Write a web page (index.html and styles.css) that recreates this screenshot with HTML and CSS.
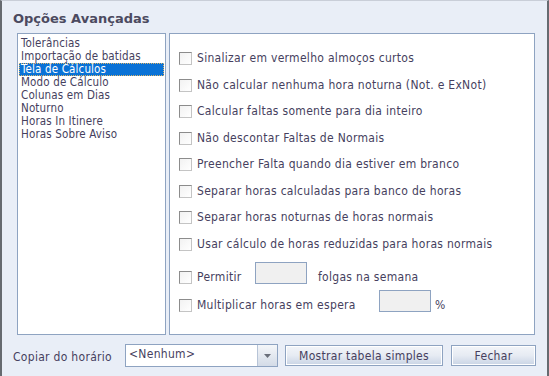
FILE: index.html
```html
<!DOCTYPE html>
<html lang="pt">
<head>
<meta charset="utf-8">
<link rel="stylesheet" href="styles.css">
</head>
<body>
<div class="window">
  <h1 class="title">Opções Avançadas</h1>
  <div class="main">
    <ul class="list">
      <li>Tolerâncias</li>
      <li>Importação de batidas</li>
      <li class="selected">Tela de Cálculos</li>
      <li>Modo de Cálculo</li>
      <li>Colunas em Dias</li>
      <li>Noturno</li>
      <li>Horas In Itinere</li>
      <li>Horas Sobre Aviso</li>
    </ul>
    <div class="panel">
      <div class="row"><span class="cb"></span><span class="lbl">Sinalizar em vermelho almoços curtos</span></div>
      <div class="row"><span class="cb"></span><span class="lbl">Não calcular nenhuma hora noturna (Not. e ExNot)</span></div>
      <div class="row"><span class="cb"></span><span class="lbl">Calcular faltas somente para dia inteiro</span></div>
      <div class="row"><span class="cb"></span><span class="lbl">Não descontar Faltas de Normais</span></div>
      <div class="row"><span class="cb"></span><span class="lbl">Preencher Falta quando dia estiver em branco</span></div>
      <div class="row"><span class="cb"></span><span class="lbl">Separar horas calculadas para banco de horas</span></div>
      <div class="row"><span class="cb"></span><span class="lbl">Separar horas noturnas de horas normais</span></div>
      <div class="row"><span class="cb"></span><span class="lbl">Usar cálculo de horas reduzidas para horas normais</span></div>
      <div class="row row-input row-permitir"><span class="cb"></span><span class="lbl lbl-permitir">Permitir</span><span class="field"></span><span class="lbl lbl-after">folgas na semana</span></div>
      <div class="row row-input row-mult"><span class="cb"></span><span class="lbl lbl-mult">Multiplicar horas em espera</span><span class="field"></span><span class="lbl lbl-pct">%</span></div>
    </div>
  </div>
  <div class="footer">
    <span class="footer-label">Copiar do horário</span>
    <div class="combo"><span class="combo-text">&lt;Nenhum&gt;</span><span class="combo-btn"><svg width="7" height="4" viewBox="0 0 7 4"><path d="M0 0H7L3.5 4Z" fill="#6a6f7a"/></svg></span></div>
    <button class="btn btn-wide">Mostrar tabela simples</button>
    <button class="btn btn-close">Fechar</button>
  </div>
</div>
</body>
</html>
```
FILE: styles.css
```css
html, body {
  margin: 0;
  padding: 0;
}
body {
  width: 549px;
  height: 376px;
  overflow: hidden;
  font-family: "DejaVu Sans Condensed", "DejaVu Sans", sans-serif;
  font-size: 12px;
  letter-spacing: 0.3px;
  color: #463f5e;
}
.window {
  box-sizing: border-box;
  width: 549px;
  height: 376px;
  background: #e9eef7;
  border-left: 2px solid #666a70;
  border-right: 2px solid #666a70;
  border-top: 1px solid #c9ced8;
}
.title {
  margin: 0;
  padding: 10px 0 0 11px;
  font-family: "DejaVu Sans", sans-serif;
  font-size: 13px;
  letter-spacing: 0;
  line-height: 16px;
  font-weight: bold;
  color: #4c4a60;
}
.main {
  display: flex;
  gap: 3px;
  margin-top: 6px;
  padding-left: 15px;
}
.list {
  box-sizing: border-box;
  width: 149px;
  height: 302px;
  margin: 0;
  padding: 3px 1px 0 1px;
  list-style: none;
  background: #fff;
  border: 1px solid #8ea3c1;
  font-size: 11.5px;
  letter-spacing: 0.15px;
}
.list li {
  height: 13px;
  line-height: 13px;
  padding-left: 2px;
  white-space: nowrap;
  box-sizing: border-box;
}
.list li.selected {
  background: #0a72d6;
  color: #fff;
  outline: 1px dotted #d9b36b;
  outline-offset: -1px;
}
.panel {
  box-sizing: border-box;
  width: 366px;
  height: 302px;
  background: #fff;
  border: 1px solid #8ea3c1;
  padding: 18px 0 0 9px;
}
.row {
  display: flex;
  align-items: center;
  height: 13px;
  margin-bottom: 13.5px;
}
.cb {
  box-sizing: border-box;
  width: 13px;
  height: 13px;
  flex: none;
  border: 1px solid #8c8c8c;
  border-right-color: #c4c4c4;
  border-bottom-color: #c4c4c4;
  background: linear-gradient(135deg, #f2f2f2, #ffffff);
}
.lbl {
  margin-left: 5px;
  line-height: 13px;
  white-space: nowrap;
}
.row-input {
  align-items: flex-end;
  height: 22px;
}
.row-permitir {
  margin-top: -2.5px;
  margin-bottom: 6px;
}
.row-mult {
  margin-bottom: 0;
}
.lbl-permitir {
  width: 58px;
}
.lbl-mult {
  width: 182px;
}
.field {
  box-sizing: border-box;
  width: 52px;
  height: 22px;
  flex: none;
  border: 1px solid #8ea3c1;
  background: #f0f0f0;
}
.lbl-after {
  margin-left: 11px;
}
.lbl-pct {
  margin-left: 4px;
}
.footer {
  display: flex;
  align-items: center;
  margin-top: 9px;
  padding-left: 11px;
  height: 23px;
}
.footer-label {
  width: 112px;
  flex: none;
  padding-top: 2px;
  white-space: nowrap;
}
.combo {
  box-sizing: border-box;
  width: 153px;
  height: 23px;
  flex: none;
  display: flex;
  border: 1px solid #8ea3c1;
  background: #fff;
}
.combo-text {
  flex: 1;
  padding-left: 3px;
  line-height: 18px;
}
.combo-btn {
  width: 19px;
  border-left: 1px solid #b7c4d7;
  background: linear-gradient(#f4f6f9, #d3dbe7);
  display: flex;
  align-items: center;
  justify-content: center;
}
.btn {
  box-sizing: border-box;
  height: 21px;
  margin: 0 0 0 7px;
  padding: 0;
  font: inherit;
  letter-spacing: inherit;
  color: #463f5e;
  border: 1px solid #8ea3c1;
  box-shadow: inset 0 0 0 1px #ffffff;
  background: linear-gradient(#f3f5f9 0%, #e6ebf3 50%, #c9d4e5 100%);
}
.btn-wide {
  width: 158px;
}
.btn-close {
  width: 85px;
  margin-left: 8px;
}
```
